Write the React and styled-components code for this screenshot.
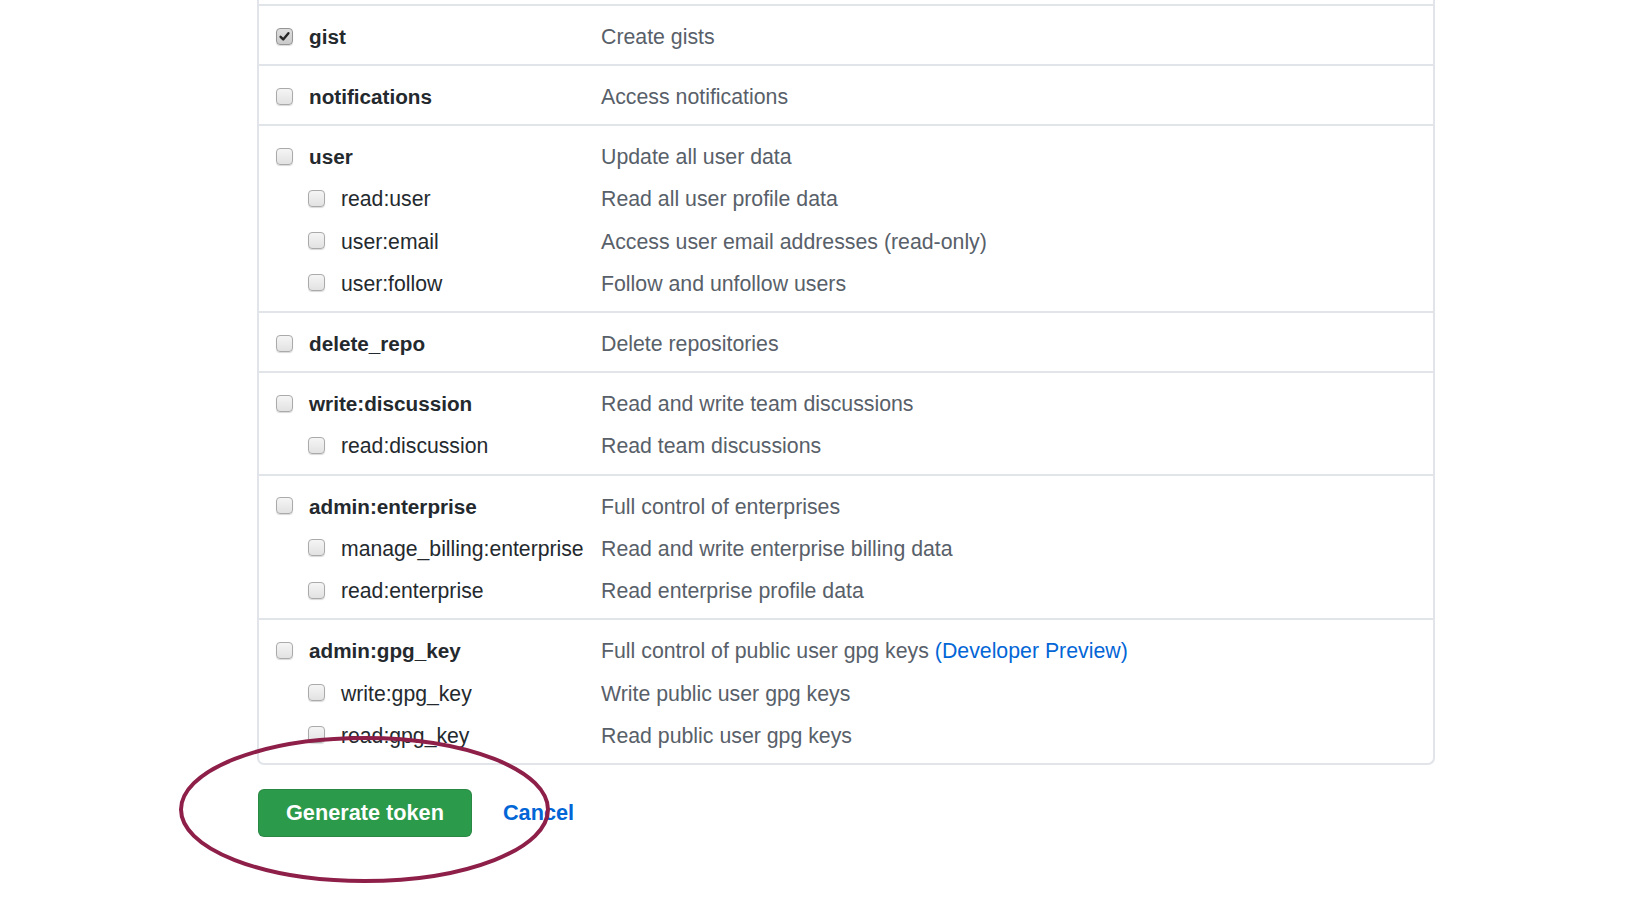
import React from "react";
import styled, { createGlobalStyle } from "styled-components";

const Global = createGlobalStyle`
  html, body { margin: 0; padding: 0; background: #ffffff; overflow: hidden; }
  body { font-family: "Liberation Sans", Arial, Helvetica, sans-serif; color: #24292e; }
  * { box-sizing: border-box; }
`;

const Page = styled.div`
  width: 1642px;
  height: 916px;
  padding-left: 257px;
  overflow: hidden;
`;

const Panel = styled.div`
  width: 1178px;
  border: 2px solid #e1e4e8;
  border-top: none;
  border-radius: 0 0 7px 7px;
  background: #fff;
`;

/* bottom tail of the previous (scrolled-away) scope group */
const ScrolledTail = styled.div`
  height: 6px;
  border-bottom: 2px solid #e1e4e8;
`;

const Section = styled.div`
  padding: 10px 0 6px;
  border-bottom: 2px solid #e1e4e8;
  &:last-child { border-bottom: none; }
`;

const Row = styled.div`
  display: grid;
  grid-template-columns: 342px 1fr;
  align-items: center;
  height: ${(p) => (p.$sub ? "42.4px" : "42px")};
  line-height: 42px;
  white-space: nowrap;
`;

const LabelCell = styled.label`
  display: flex;
  align-items: center;
  gap: 16px;
  padding-left: ${(p) => (p.$sub ? "49px" : "17px")};
  font-size: ${(p) => (p.$sub ? "21.2px" : "20.7px")};
  font-weight: ${(p) => (p.$sub ? 400 : 700)};
  color: #24292e;
`;

const Desc = styled.span`
  font-size: 21.3px;
  color: #586069;
`;

const Link = styled.a`
  color: #0366d6;
  text-decoration: none;
`;

const Box = styled.span`
  position: relative;
  top: -1px;
  flex: 0 0 17px;
  width: 17px;
  height: 17px;
  border-radius: 4px;
  border: 1px solid ${(p) => (p.$checked ? "#959595" : "#aaaaaa")};
  background: ${(p) =>
    p.$checked
      ? "linear-gradient(#dedede, #cacaca)"
      : "linear-gradient(#f5f5f5, #e2e2e2)"};
  box-shadow: 0 1px 1px rgba(0, 0, 0, 0.15);
  display: flex;
  align-items: center;
  justify-content: center;
`;

const Checkbox = ({ checked }) => (
  <Box $checked={checked}>
    {checked && (
      <svg width="13" height="13" viewBox="0 0 13 13">
        <path
          d="M2.6 6.8 L5.2 9.4 L10.4 3.2"
          fill="none"
          stroke="#262626"
          strokeWidth="2.4"
          strokeLinecap="round"
          strokeLinejoin="round"
        />
      </svg>
    )}
  </Box>
);

const Actions = styled.div`
  position: relative;
  display: flex;
  align-items: center;
  gap: 31px;
  margin-top: 24px;
  padding-left: 1px;
`;

const PrimaryButton = styled.button`
  height: 48px;
  padding: 0 27px;
  border: 1px solid rgba(27, 31, 35, 0.15);
  border-radius: 6px;
  background: #2c9a4b;
  color: #ffffff;
  font-family: "Liberation Sans", Arial, sans-serif;
  font-size: 21.7px;
  font-weight: 700;
  cursor: pointer;
`;

const CancelLink = styled.a`
  color: #0366d6;
  font-size: 21.7px;
  font-weight: 700;
  text-decoration: none;
`;

const Annotation = styled.svg`
  position: absolute;
  left: -78px;
  top: -53px;
  pointer-events: none;
`;

const sections = [
  { name: "gist", desc: "Create gists", checked: true },
  { name: "notifications", desc: "Access notifications" },
  {
    name: "user",
    desc: "Update all user data",
    subs: [
      { name: "read:user", desc: "Read all user profile data" },
      { name: "user:email", desc: "Access user email addresses (read-only)" },
      { name: "user:follow", desc: "Follow and unfollow users" },
    ],
  },
  { name: "delete_repo", desc: "Delete repositories" },
  {
    name: "write:discussion",
    desc: "Read and write team discussions",
    subs: [{ name: "read:discussion", desc: "Read team discussions" }],
  },
  {
    name: "admin:enterprise",
    desc: "Full control of enterprises",
    subs: [
      { name: "manage_billing:enterprise", desc: "Read and write enterprise billing data" },
      { name: "read:enterprise", desc: "Read enterprise profile data" },
    ],
  },
  {
    name: "admin:gpg_key",
    desc: "Full control of public user gpg keys",
    preview: true,
    subs: [
      { name: "write:gpg_key", desc: "Write public user gpg keys" },
      { name: "read:gpg_key", desc: "Read public user gpg keys" },
    ],
  },
];

export default function App() {
  return (
    <>
      <Global />
      <Page>
        <Panel>
          <ScrolledTail />
          {sections.map((s) => (
            <Section key={s.name}>
              <Row>
                <LabelCell>
                  <Checkbox checked={s.checked} />
                  {s.name}
                </LabelCell>
                <Desc>
                  {s.desc}
                  {s.preview && (
                    <>
                      {" "}
                      <Link href="#">(Developer Preview)</Link>
                    </>
                  )}
                </Desc>
              </Row>
              {(s.subs || []).map((sub) => (
                <Row key={sub.name} $sub>
                  <LabelCell $sub>
                    <Checkbox />
                    {sub.name}
                  </LabelCell>
                  <Desc>{sub.desc}</Desc>
                </Row>
              ))}
            </Section>
          ))}
        </Panel>
        <Actions>
          <PrimaryButton>Generate token</PrimaryButton>
          <CancelLink href="#">Cancel</CancelLink>
          <Annotation width="371" height="147" viewBox="0 0 371 147">
            <ellipse
              cx="185.5"
              cy="73.5"
              rx="183.5"
              ry="71.5"
              fill="none"
              stroke="#8e1f48"
              strokeWidth="4"
            />
          </Annotation>
        </Actions>
      </Page>
    </>
  );
}
